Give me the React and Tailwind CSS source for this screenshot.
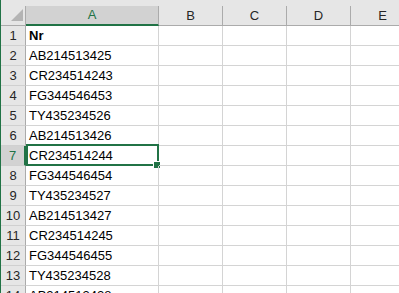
import React from "react";

const values = [
  "Nr",
  "AB214513425",
  "CR234514243",
  "FG344546453",
  "TY435234526",
  "AB214513426",
  "CR234514244",
  "FG344546454",
  "TY435234527",
  "AB214513427",
  "CR234514245",
  "FG344546455",
  "TY435234528",
  "AB214513428",
];

const cols = [
  { name: "A", w: "w-[133px]" },
  { name: "B", w: "w-[64px]" },
  { name: "C", w: "w-[64px]" },
  { name: "D", w: "w-[64px]" },
  { name: "E", w: "w-[64px]" },
];

export default function App() {
  return (
    <div
      className="w-[399px] h-[293px] overflow-hidden bg-white flex text-[13px] text-black"
      style={{ fontFamily: '"Liberation Sans", Arial, sans-serif' }}
    >
      <div className="w-[1px] shrink-0 bg-[#217346]" />
      <div className="flex flex-col shrink-0">
        {/* column headers */}
        <div className="flex h-[26px] bg-[#e6e6e6] pt-[6px]">
          <div className="w-[25px] h-[20px] border-b border-r border-[#ababab] relative">
            <div
              className="absolute left-[10px] top-[3px] w-[12px] h-[12px] bg-[#b4b4b4]"
              style={{ clipPath: "polygon(100% 0, 100% 100%, 0 100%)" }}
            />
          </div>
          {cols.map((c) => (
            <div
              key={c.name}
              className={`${c.w} shrink-0 h-[20px] flex items-center justify-center border-r ${
                c.name === "A"
                  ? "bg-[#d2d2d2] text-[#217346] border-b-2 border-b-[#217346] border-r-[#ababab]"
                  : "border-b border-[#ababab] text-[#262626]"
              }`}
            >
              {c.name}
            </div>
          ))}
        </div>
        {/* rows */}
        {values.map((v, i) => {
          const n = i + 1;
          const sel = n === 7;
          return (
            <div key={n} className="flex h-[20px]">
              <div
                className={`w-[25px] shrink-0 flex items-center justify-center border-b border-[#d0d0d0] ${
                  sel
                    ? "bg-[#d2d2d2] text-[#217346] border-r-2 border-r-[#217346]"
                    : "bg-[#e6e6e6] text-[#262626] border-r border-r-[#ababab]"
                }`}
              >
                {n}
              </div>
              {cols.map((c, ci) => (
                <div
                  key={c.name}
                  className={`${c.w} shrink-0 border-r border-b border-[#d4d4d4] relative leading-[19px] pl-[3px] whitespace-nowrap`}
                >
                  {ci === 0 && <span className={n === 1 ? "font-bold" : ""}>{v}</span>}
                  {ci === 0 && sel && (
                    <>
                      <div className="absolute top-[-2px] left-0 right-[-1px] bottom-[-1px] border-2 border-[#217346]" />
                      <div className="absolute right-[-3px] bottom-[-4px] w-[8px] h-[8px] bg-[#217346] border border-white" />
                    </>
                  )}
                </div>
              ))}
            </div>
          );
        })}
      </div>
    </div>
  );
}
